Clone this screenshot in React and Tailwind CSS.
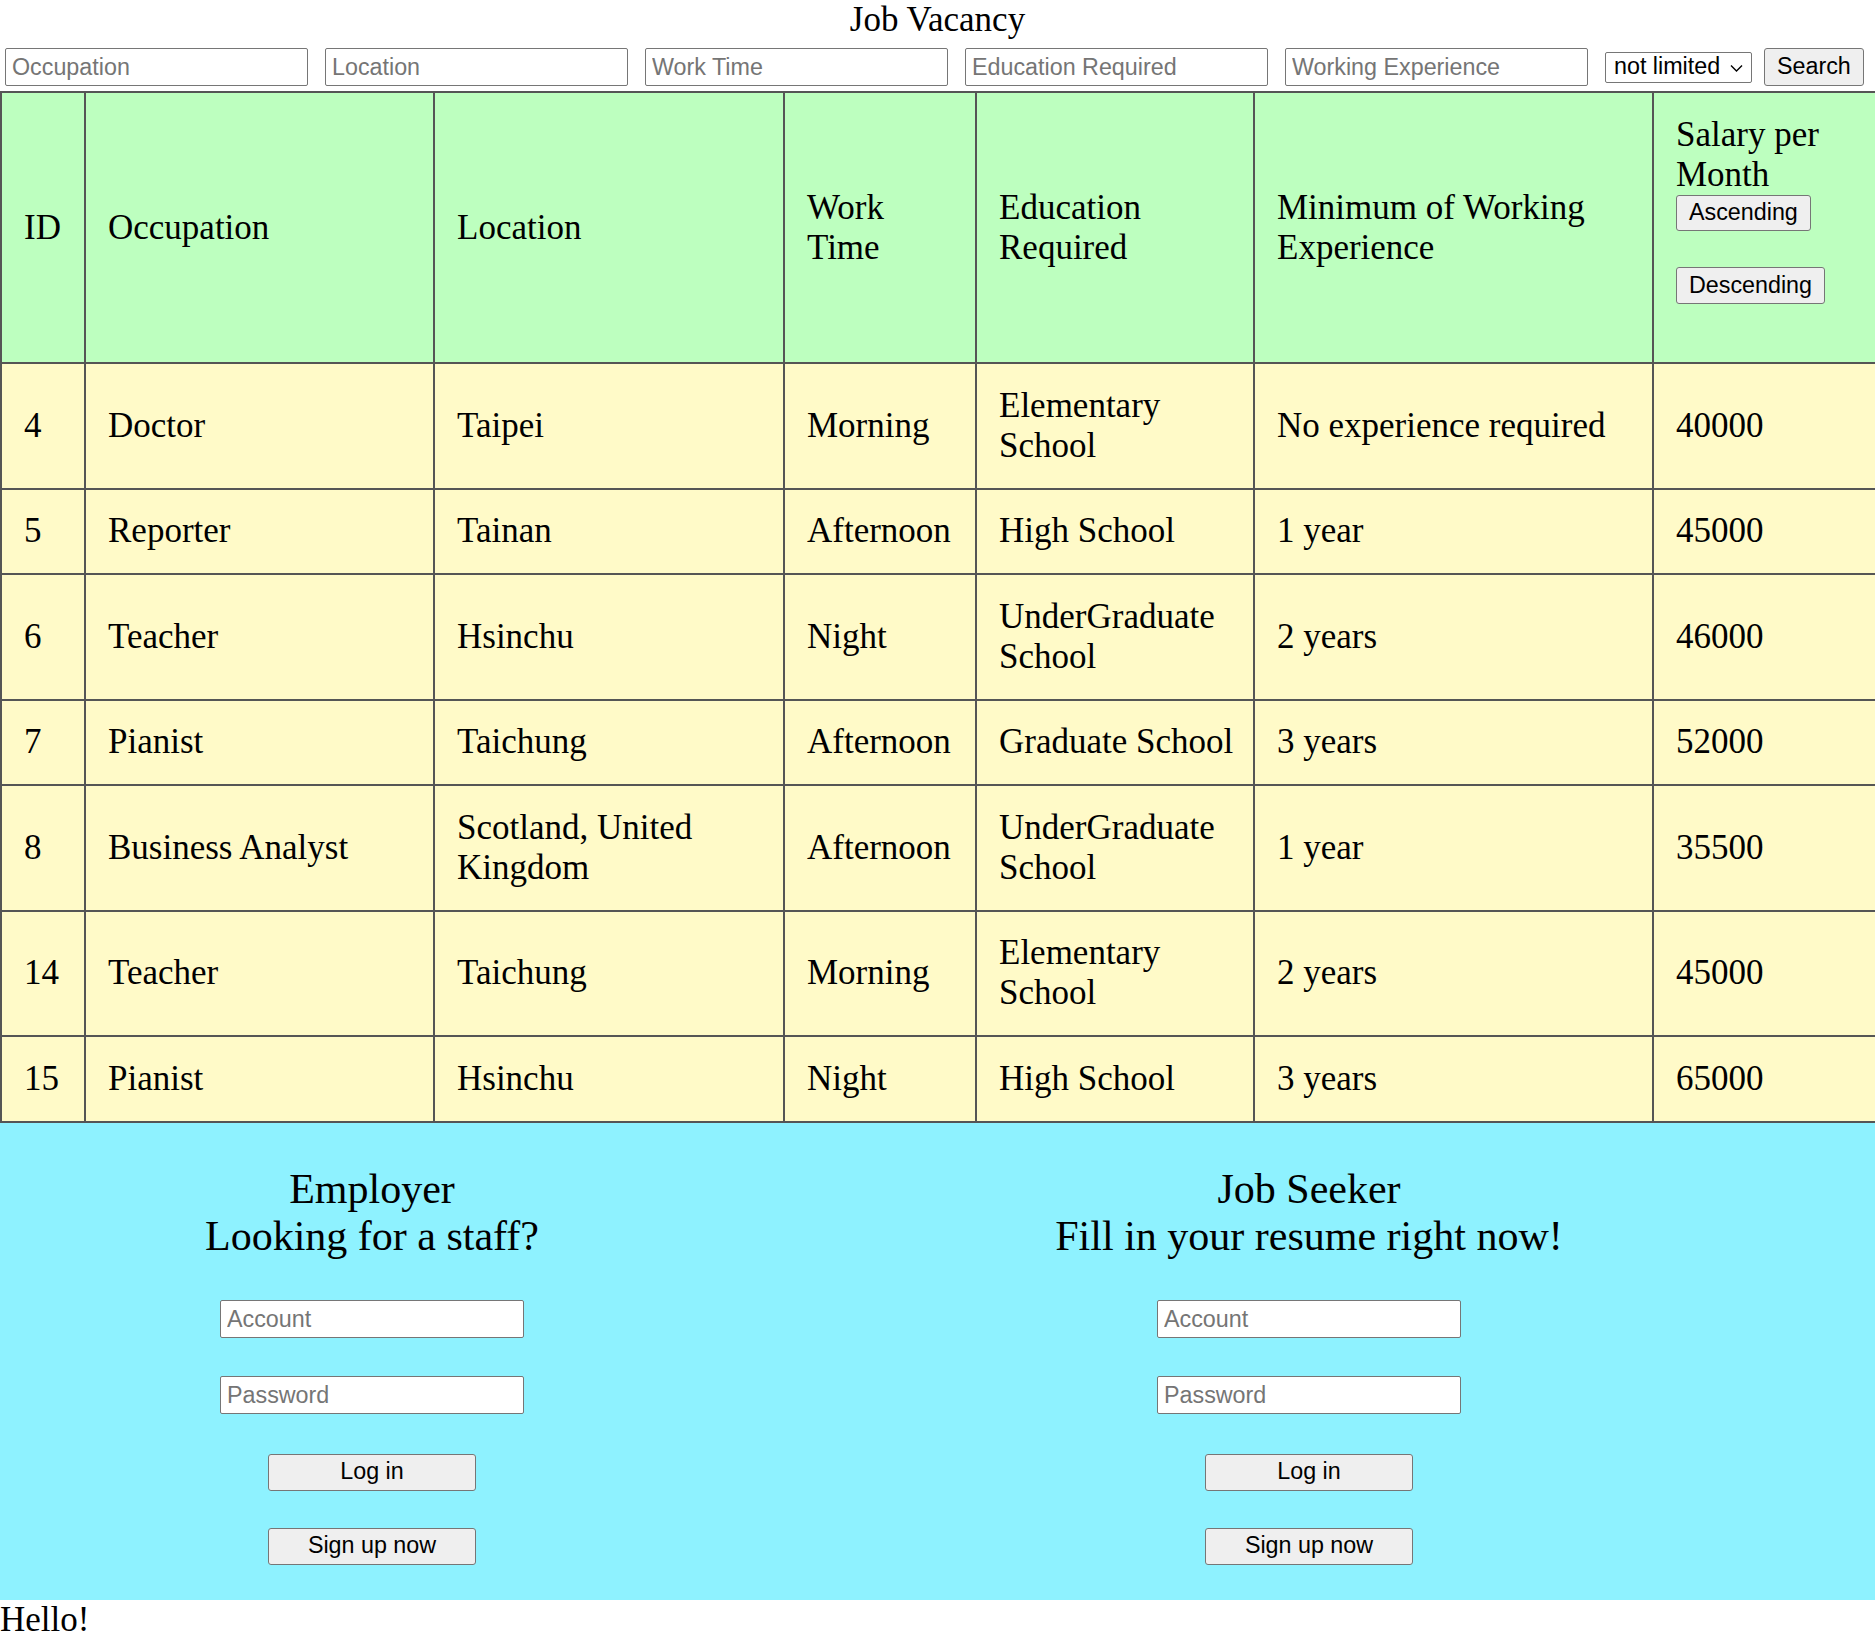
import React from 'react';

const jobs = [
  { id: 4, occupation: 'Doctor', location: 'Taipei', time: 'Morning', education: 'Elementary School', experience: 'No experience required', salary: 40000 },
  { id: 5, occupation: 'Reporter', location: 'Tainan', time: 'Afternoon', education: 'High School', experience: '1 year', salary: 45000 },
  { id: 6, occupation: 'Teacher', location: 'Hsinchu', time: 'Night', education: 'UnderGraduate School', experience: '2 years', salary: 46000 },
  { id: 7, occupation: 'Pianist', location: 'Taichung', time: 'Afternoon', education: 'Graduate School', experience: '3 years', salary: 52000 },
  { id: 8, occupation: 'Business Analyst', location: 'Scotland, United Kingdom', time: 'Afternoon', education: 'UnderGraduate School', experience: '1 year', salary: 35500 },
  { id: 14, occupation: 'Teacher', location: 'Taichung', time: 'Morning', education: 'Elementary School', experience: '2 years', salary: 45000 },
  { id: 15, occupation: 'Pianist', location: 'Hsinchu', time: 'Night', education: 'High School', experience: '3 years', salary: 65000 },
];

// shared cell styles
const cell = 'border-2 border-[#555] pl-[22px] pr-[22px] py-[21.75px] text-left font-normal align-middle';
const eduCell = 'border-2 border-[#555] pl-[22px] pr-[10px] py-[21.75px] text-left font-normal align-middle';

const inputCls =
  "bg-white border border-[#767676] rounded-[2px] pl-[6px] text-[23.3px] font-['Liberation_Sans'] text-black placeholder:text-[#757575] outline-none";

const btnCls =
  "bg-[#efefef] border border-[#767676] rounded-[3px] px-[12px] text-[23.3px] leading-none font-['Liberation_Sans'] text-black";

function SortButtons() {
  return (
    <div className="flex flex-col items-start">
      <button className={`${btnCls} h-[36px]`}>Ascending</button>
      <button className={`${btnCls} h-[37px] mt-[36px]`}>Descending</button>
    </div>
  );
}

function LoginPanel({ role, tagline, extra }) {
  return (
    <div className={`w-[744px] flex flex-col items-center ${extra}`}>
      <h2 className="text-[42px] leading-[47px] text-center font-normal">
        {role}
        <br />
        {tagline}
      </h2>
      <input className={`${inputCls} w-[304px] h-[38px] mt-[40px]`} placeholder="Account" />
      <input className={`${inputCls} w-[304px] h-[38px] mt-[38px]`} type="password" placeholder="Password" />
      <button className={`${btnCls} w-[208px] h-[37px] mt-[40px]`}>Log in</button>
      <button className={`${btnCls} w-[208px] h-[37px] mt-[37px]`}>Sign up now</button>
    </div>
  );
}

export default function App() {
  return (
    <div className="w-[1875px] bg-white font-['Liberation_Serif'] text-[35px] leading-[40px] text-black">
      {/* Title */}
      <div className="h-[39px] leading-[39px] text-center">Job Vacancy</div>

      {/* Search filters */}
      <div className="flex items-center h-[38px] mt-[9px] pl-[5px] gap-[17px]">
        <input className={`${inputCls} w-[303px] h-[38px]`} placeholder="Occupation" />
        <input className={`${inputCls} w-[303px] h-[38px]`} placeholder="Location" />
        <input className={`${inputCls} w-[303px] h-[38px]`} placeholder="Work Time" />
        <input className={`${inputCls} w-[303px] h-[38px]`} placeholder="Education Required" />
        <input className={`${inputCls} w-[303px] h-[38px]`} placeholder="Working Experience" />
        <div className="flex items-center gap-[12px]">
          <div className="relative flex h-[31px]">
            <select className="appearance-none bg-white border border-[#767676] rounded-[2px] w-[147px] h-[31px] pl-[8px] text-[23.3px] leading-none font-['Liberation_Sans'] text-black outline-none">
              <option>not limited</option>
            </select>
            <svg className="absolute right-[9px] top-[12px] pointer-events-none" width="13" height="8" viewBox="0 0 13 8" fill="none">
              <path d="M1 1.5l5.5 5.5 5.5-5.5" stroke="#000" strokeWidth="1.4" />
            </svg>
          </div>
          <button className={`${btnCls} h-[38px]`}>Search</button>
        </div>
      </div>

      {/* Vacancy table */}
      <table className="w-full table-fixed border-collapse mt-[5px]">
        <colgroup>
          <col className="w-[84px]" />
          <col className="w-[349px]" />
          <col className="w-[350px]" />
          <col className="w-[192px]" />
          <col className="w-[278px]" />
          <col className="w-[399px]" />
          <col className="w-[223px]" />
        </colgroup>
        <thead>
          <tr className="bg-[#bdffbf] h-[271px]">
            <th className={cell}>ID</th>
            <th className={cell}>Occupation</th>
            <th className={cell}>Location</th>
            <th className={cell}>Work Time</th>
            <th className={eduCell}>Education Required</th>
            <th className={cell}>Minimum of Working Experience</th>
            <th className="border-2 border-[#555] pl-[22px] pr-[12px] pt-[22px] text-left font-normal align-top">
              <div>Salary per Month</div>
              <SortButtons />
            </th>
          </tr>
        </thead>
        <tbody>
          {jobs.map((job) => (
            <tr key={job.id} className="bg-[#fffac8]">
              <td className={cell}>{job.id}</td>
              <td className={cell}>{job.occupation}</td>
              <td className={cell}>{job.location}</td>
              <td className={cell}>{job.time}</td>
              <td className={eduCell}>{job.education}</td>
              <td className={cell}>{job.experience}</td>
              <td className={cell}>{job.salary}</td>
            </tr>
          ))}
        </tbody>
      </table>

      {/* Login area */}
      <div className="bg-[#8ef2ff] flex pt-[43px] pb-[35px]">
        <LoginPanel role="Employer" tagline="Looking for a staff?" extra="" />
        <LoginPanel role="Job Seeker" tagline="Fill in your resume right now!" extra="ml-[193px]" />
      </div>

      <div className="h-[40px]">Hello!</div>
    </div>
  );
}
